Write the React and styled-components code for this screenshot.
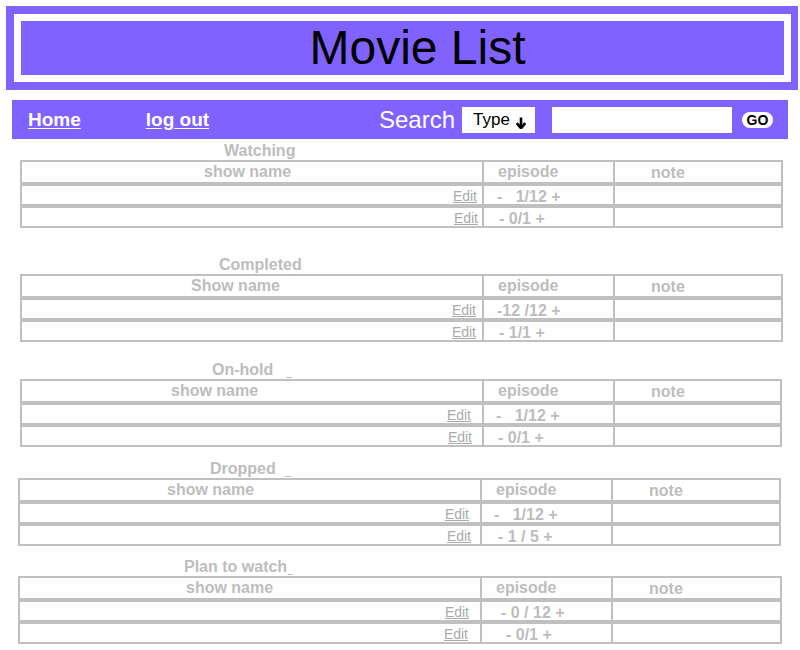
import React from "react";
import styled, { createGlobalStyle } from "styled-components";

const PURPLE = "#8062ff";
const LINE = "#c0c0c0";
const INK = "#bdbdbd";

const GlobalStyle = createGlobalStyle`
  html, body { margin: 0; padding: 0; background: #fff; }
  body { font-family: "Liberation Sans", Arial, sans-serif; }
`;

const Page = styled.div`
  width: 800px;
  padding-top: 6px;
  padding-bottom: 8px;
`;

const Banner = styled.header`
  margin-left: 6px;
  width: 792px;
  box-sizing: border-box;
  background: ${PURPLE};
  padding: 8px 7px 8px 8px;
`;

const BannerFrame = styled.div`
  background: #fff;
  padding: 7px;
`;

const BannerInner = styled.div`
  background: ${PURPLE};
  height: 54px;
  display: flex;
  align-items: center;
  justify-content: center;
  padding-left: 30px;
`;

const BannerTitle = styled.h1`
  margin: 0;
  font-weight: normal;
  font-size: 48px;
  line-height: 54px;
  color: #000;
`;

const Nav = styled.nav`
  margin: 10px 0 0 12px;
  width: 776px;
  height: 39px;
  box-sizing: border-box;
  background: ${PURPLE};
  display: flex;
  align-items: center;
  padding: 0 15px 0 16px;
`;

const NavLink = styled.a`
  color: #fff;
  font-weight: bold;
  font-size: 19px;
  text-decoration: underline;
  text-underline-offset: 2px;
  margin-left: ${(p) => p.$gap || 0}px;
  cursor: pointer;
`;

const SearchGroup = styled.div`
  margin-left: auto;
  display: flex;
  align-items: center;
`;

const SearchLabel = styled.span`
  color: #fff;
  font-size: 24px;
  margin-right: 7px;
`;

const TypeSelect = styled.div`
  width: 73px;
  height: 26px;
  box-sizing: border-box;
  background: #fff;
  display: flex;
  align-items: center;
  padding-left: 11px;
  font-size: 17px;
  color: #000;
  margin-right: 17px;
  svg { margin-left: 6px; margin-top: 7px; }
`;

const SearchInput = styled.input`
  width: 180px;
  height: 26px;
  box-sizing: border-box;
  border: none;
  outline: none;
  background: #fff;
  margin-right: 10px;
  padding: 0 4px;
`;

const GoButton = styled.button`
  width: 31px;
  height: 16px;
  border: none;
  border-radius: 8px;
  background: #fff;
  color: #000;
  font-family: "Liberation Sans", Arial, sans-serif;
  font-weight: bold;
  font-size: 14px;
  line-height: 16px;
  padding: 0;
  display: flex;
  align-items: center;
  justify-content: center;
`;

const Section = styled.section`
  margin-top: ${(p) => p.$mt}px;
`;

const SectionTitle = styled.div`
  height: 18px;
  line-height: 18px;
  padding-left: ${(p) => p.$x}px;
  color: ${INK};
  font-size: 16px;
  font-weight: bold;
  white-space: pre;
`;

const Mark = styled.span`
  display: inline-block;
  width: ${(p) => p.$w}px;
  height: 1px;
  background: ${INK};
  margin-left: ${(p) => p.$ml}px;
  vertical-align: ${(p) => p.$dy}px;
`;

const Table = styled.div`
  margin-left: ${(p) => p.$left}px;
  width: ${(p) => p.$width}px;
  box-sizing: border-box;
  border: 2px solid ${LINE};
  color: ${INK};
  font-size: 16px;
  font-weight: bold;
`;

const Row = styled.div`
  display: grid;
  grid-template-columns: 460px 131px 1fr;
  height: ${(p) => (p.$head ? 20 : 18)}px;
  border-top: ${(p) => (p.$head ? "none" : `4px solid ${LINE}`)};
`;

const Cell = styled.div`
  display: flex;
  align-items: center;
  box-sizing: border-box;
  white-space: pre;
  line-height: 18px;
  border-left: ${(p) => (p.$divided ? `2px solid ${LINE}` : "none")};
  justify-content: ${(p) => (p.$end ? "flex-end" : "flex-start")};
  padding-left: ${(p) => p.$pl || 0}px;
  padding-right: ${(p) => p.$pr || 0}px;
  padding-top: ${(p) => p.$pt || 0}px;
`;

const EditLink = styled.a`
  font-size: 14px;
  font-weight: normal;
  color: #aaaaaa;
  text-decoration: underline;
  cursor: pointer;
`;

const sections = [
  {
    title: "Watching",
    mark: null,
    titleX: 224,
    mt: 3,
    left: 20,
    width: 763,
    nameX: 182,
    name: "show name",
    rows: [
      { edit: 5, ep: "-   1/12 +", epPad: 13 },
      { edit: 4, ep: "- 0/1 +", epPad: 15 },
    ],
  },
  {
    title: "Completed",
    mark: { w: 4, ml: -15, dy: -5 },
    titleX: 219,
    mt: 28,
    left: 20,
    width: 763,
    nameX: 169,
    name: "Show name",
    rows: [
      { edit: 6, ep: "-12 /12 +", epPad: 13 },
      { edit: 6, ep: "- 1/1 +", epPad: 15 },
    ],
  },
  {
    title: "On-hold",
    mark: { w: 6, ml: 13, dy: -3 },
    titleX: 212,
    mt: 19,
    left: 20,
    width: 762,
    nameX: 149,
    name: "show name",
    rows: [
      { edit: 11, ep: "-   1/12 +", epPad: 12 },
      { edit: 10, ep: "- 0/1 +", epPad: 14 },
    ],
  },
  {
    title: "Dropped",
    mark: { w: 6, ml: 9, dy: -3 },
    titleX: 210,
    mt: 13,
    left: 18,
    width: 763,
    nameX: 147,
    name: "show name",
    rows: [
      { edit: 11, ep: "-   1/12 +", epPad: 12 },
      { edit: 9, ep: "- 1 / 5 +", epPad: 16 },
    ],
  },
  {
    title: "Plan to watch",
    mark: { w: 5, ml: 1, dy: -3 },
    titleX: 184,
    mt: 12,
    left: 18,
    width: 764,
    nameX: 166,
    name: "show name",
    rows: [
      { edit: 11, ep: "- 0 / 12 +", epPad: 19 },
      { edit: 12, ep: "- 0/1 +", epPad: 24 },
    ],
  },
];

const DownArrow = () => (
  <svg width="10" height="12" viewBox="0 0 10 12">
    <path d="M5 0.5 V10" stroke="#000" strokeWidth="2.6" fill="none" />
    <path d="M0.8 6.2 L5 11.2 L9.2 6.2" stroke="#000" strokeWidth="2.6" fill="none" strokeLinejoin="miter" />
  </svg>
);

function ListSection({ s }) {
  return (
    <Section $mt={s.mt}>
      <SectionTitle $x={s.titleX}>
        {s.title}
        {s.mark && <Mark $w={s.mark.w} $ml={s.mark.ml} $dy={s.mark.dy} />}
      </SectionTitle>
      <Table $left={s.left} $width={s.width}>
        <Row $head>
          <Cell $pl={s.nameX}>{s.name}</Cell>
          <Cell $divided $pl={14}>episode</Cell>
          <Cell $divided $pl={36} $pt={2}>note</Cell>
        </Row>
        {s.rows.map((r, i) => (
          <Row key={i}>
            <Cell $end $pr={r.edit}>
              <EditLink>Edit</EditLink>
            </Cell>
            <Cell $divided $pl={r.epPad} $pt={2}>{r.ep}</Cell>
            <Cell $divided />
          </Row>
        ))}
      </Table>
    </Section>
  );
}

export default function App() {
  return (
    <>
      <GlobalStyle />
      <Page>
        <Banner>
          <BannerFrame>
            <BannerInner>
              <BannerTitle>Movie List</BannerTitle>
            </BannerInner>
          </BannerFrame>
        </Banner>
        <Nav>
          <NavLink>Home</NavLink>
          <NavLink $gap={65}>log out</NavLink>
          <SearchGroup>
            <SearchLabel>Search</SearchLabel>
            <TypeSelect>
              Type
              <DownArrow />
            </TypeSelect>
            <SearchInput type="text" />
            <GoButton>GO</GoButton>
          </SearchGroup>
        </Nav>
        {sections.map((s) => (
          <ListSection key={s.title} s={s} />
        ))}
      </Page>
    </>
  );
}
